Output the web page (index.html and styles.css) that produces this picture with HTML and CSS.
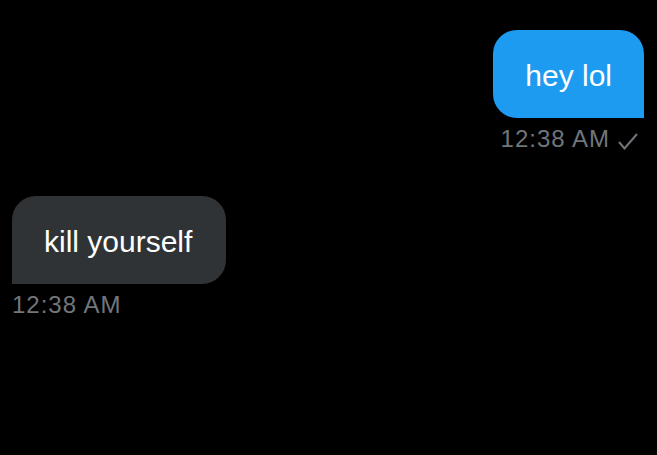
FILE: index.html
```html
<!DOCTYPE html>
<html>
<head>
<meta charset="utf-8">
<link rel="stylesheet" href="styles.css">
</head>
<body>
<div class="chat">
  <div class="msg msg-out">
    <div class="bubble bubble-out">hey lol</div>
    <div class="meta meta-out">
      <span class="time">12:38 AM</span>
      <svg class="check" width="20" height="17" viewBox="0 0 20 17"><polyline points="1,9 6.5,15.5 19,1" fill="none" stroke="#71767b" stroke-width="2"/></svg>
    </div>
  </div>
  <div class="msg msg-in">
    <div class="bubble bubble-in">kill yourself</div>
    <div class="meta">
      <span class="time">12:38 AM</span>
    </div>
  </div>
</div>
</body>
</html>
```
FILE: styles.css
```css
html, body {
  margin: 0;
  background: #000;
  height: 100%;
}
body {
  font-family: "Liberation Sans", Arial, sans-serif;
}
.chat {
  padding: 30px 13px 0 12px;
  display: flex;
  flex-direction: column;
  gap: 43px;
}
.msg {
  display: flex;
  flex-direction: column;
}
.msg-out { align-items: flex-end; }
.msg-in { align-items: flex-start; }
.bubble {
  color: #fff;
  font-size: 30px;
  line-height: 36px;
  padding: 28px 32px 24px 32px;
  white-space: nowrap;
}
.bubble-out {
  background: #1d9bf0;
  border-radius: 24px 24px 0 24px;
}
.bubble-in {
  background: #2f3336;
  border-radius: 24px 24px 24px 0;
  padding-right: 34px;
}
.meta {
  margin-top: 7px;
  display: flex;
  align-items: center;
  color: #71767b;
  font-size: 24px;
  line-height: 28px;
  letter-spacing: 1px;
}
.meta-out { margin-right: 6px; }
.check { margin-left: 8px; margin-top: 5px; }
```
